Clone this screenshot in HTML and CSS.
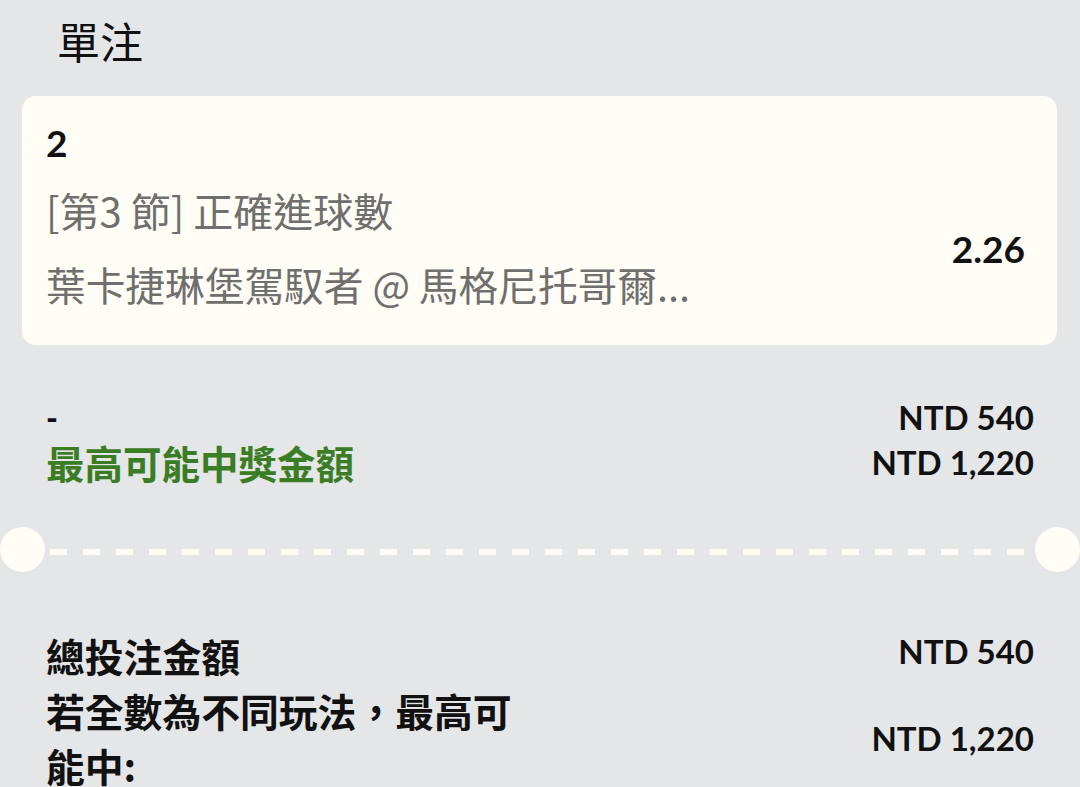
FILE: index.html
```html
<!DOCTYPE html>
<html lang="zh-Hant">
<head>
<meta charset="utf-8">
<link rel="stylesheet" href="styles.css">
</head>
<body>
<div class="page">
  <h1 class="title">單注</h1>
  <div class="card">
    <div class="card-info">
      <div class="card-num">2</div>
      <div class="card-market">[第3 節] 正確進球數</div>
      <div class="card-event">葉卡捷琳堡駕馭者 @ 馬格尼托哥爾...</div>
    </div>
    <div class="card-odds">2.26</div>
  </div>
  <div class="summary">
    <div class="summary-left">
      <div class="dash-line">-</div>
      <div class="green">最高可能中獎金額</div>
    </div>
    <div class="summary-right">
      <div class="amt">NTD 540</div>
      <div class="amt">NTD 1,220</div>
    </div>
  </div>
  <div class="divider">
    <span class="dot"></span>
    <span class="dashes"></span>
    <span class="dot"></span>
  </div>
  <div class="totals">
    <div class="total-row">
      <div class="total-label">總投注金額</div>
      <div class="amt">NTD 540</div>
    </div>
    <div class="total-row multi">
      <div class="total-label wrap">若全數為不同玩法，最高可能中:</div>
      <div class="amt">NTD 1,220</div>
    </div>
  </div>
</div>
</body>
</html>
```

FILE: styles.css
```css
html, body {
  margin: 0;
  padding: 0;
}
body {
  background: #e5e6e8;
  font-family: "Lato", "Noto Sans CJK TC", sans-serif;
  color: #111;
  width: 1080px;
  height: 787px;
  overflow: hidden;
}
.page {
  display: flex;
  flex-direction: column;
}
.title {
  margin: 0 0 12px 0;
  padding-left: 57px;
  font-family: "Noto Sans CJK TC", sans-serif;
  font-weight: 400;
  font-size: 43px;
  line-height: 80px;
  height: 84px;
  color: #111;
}
.card {
  margin: 0 23px 0 22px;
  height: 249px;
  box-sizing: border-box;
  background: #fffdf5;
  border-radius: 14px;
  padding: 18px 32px 0 24px;
  display: flex;
  justify-content: space-between;
}
.card-info {
  display: flex;
  flex-direction: column;
}
.card-num {
  font-family: "Lato", sans-serif;
  font-weight: 700;
  font-size: 37px;
  line-height: 58px;
}
.card-market,
.card-event {
  font-family: "Noto Sans CJK TC", sans-serif;
  font-size: 40px;
  line-height: 60px;
  color: #6f6f6d;
  white-space: nowrap;
}
.card-market {
  margin-top: 8px;
}
.card-event {
  margin-top: 14px;
  font-size: 39.7px;
}
.card-odds {
  align-self: flex-start;
  margin-top: 113px;
  font-weight: 700;
  font-size: 37px;
  line-height: 44px;
}
.summary {
  display: flex;
  justify-content: space-between;
  padding: 50px 46px 0 46px;
}
.summary-left > div,
.summary-right > div {
  line-height: 45px;
}
.dash-line {
  font-weight: 900;
  font-size: 32px;
}
.green {
  font-family: "Noto Sans CJK TC", sans-serif;
  font-weight: 700;
  font-size: 38.5px;
  color: #3b7d24;
}
.summary-right {
  text-align: right;
}
.amt {
  font-family: "Lato", sans-serif;
  font-weight: 700;
  font-size: 33px;
  text-align: right;
  white-space: nowrap;
}
.divider {
  display: flex;
  align-items: center;
  margin-top: 42px;
  height: 45px;
}
.dot {
  width: 45px;
  height: 45px;
  border-radius: 50%;
  background: #fffdf5;
  flex: none;
}
.dashes {
  flex: 1;
  height: 6px;
  margin: 0 4px 0 5px;
  background-image: linear-gradient(to right, #fffdf5 0, #fffdf5 17px, transparent 17px);
  background-size: 33px 6px;
  background-repeat: repeat-x;
  transform: translateY(2px);
}
.totals {
  padding: 56px 46px 0 46px;
  display: flex;
  flex-direction: column;
}
.total-row {
  display: flex;
  justify-content: space-between;
  align-items: center;
}
.total-label {
  font-family: "Noto Sans CJK TC", sans-serif;
  font-weight: 700;
  font-size: 38.8px;
  line-height: 55px;
  color: #111;
}
.total-label.wrap {
  width: 475px;
}
.total-row .amt {
  line-height: 55px;
}
.total-row:first-child .amt {
  align-self: flex-start;
  margin-top: -4px;
}
```
